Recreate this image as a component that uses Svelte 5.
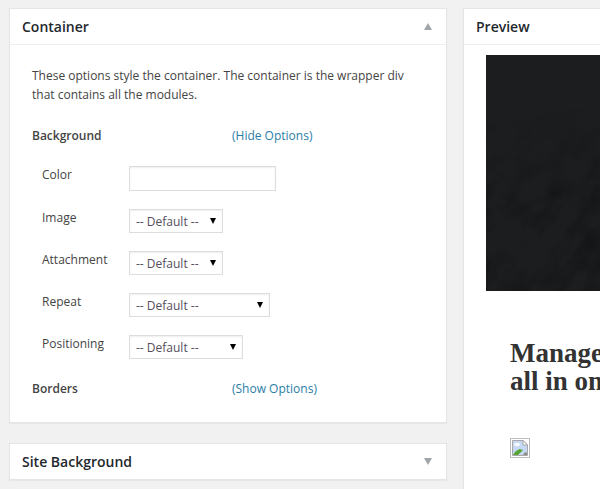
<script>
  const fields = [
    { label: 'Image', size: 'sm' },
    { label: 'Attachment', size: 'sm' },
    { label: 'Repeat', size: 'lg' },
    { label: 'Positioning', size: 'md' }
  ];
</script>

<div class="page">
  <div class="left">
    <section class="card">
      <header class="head">
        <h3>Container</h3>
        <span class="tri up"></span>
      </header>
      <div class="body">
        <p class="intro">These options style the container. The container is the wrapper div that contains all the modules.</p>
        <div class="group">
          <strong>Background</strong>
          <a href="#hide">(Hide Options)</a>
        </div>
        <div class="fields">
          <div class="field">
            <label for="color">Color</label>
            <input id="color" type="text" />
          </div>
          {#each fields as f}
            <div class="field">
              <label for={f.label}>{f.label}</label>
              <span class="sel {f.size}">
                <select id={f.label}><option>-- Default --</option></select>
              </span>
            </div>
          {/each}
        </div>
        <div class="group last">
          <strong>Borders</strong>
          <a href="#show">(Show Options)</a>
        </div>
      </div>
    </section>
    <section class="card">
      <header class="head closed">
        <h3>Site Background</h3>
        <span class="tri down"></span>
      </header>
    </section>
  </div>

  <section class="card preview">
    <header class="head">
      <h3>Preview</h3>
    </header>
    <div class="pbody">
      <svg class="hero" width="500" height="236" viewBox="0 0 500 236" aria-hidden="true">
        <defs>
          <filter id="grain" x="0" y="0" width="100%" height="100%">
            <feTurbulence type="fractalNoise" baseFrequency="0.025 0.05" numOctaves="6" seed="23" />
            <feColorMatrix values="0 0 0 0 0  0 0 0 0 0  0 0 0 0 0  1.7 0 0 0 -0.72" />
          </filter>
          <linearGradient id="fade" x1="0" y1="0" x2="0.3" y2="1">
            <stop offset="0.25" stop-color="#000" />
            <stop offset="0.6" stop-color="#fff" />
          </linearGradient>
          <mask id="m"><rect width="500" height="236" fill="url(#fade)" /></mask>
        </defs>
        <rect width="500" height="236" fill="#1c1d1f" />
        <g mask="url(#m)" opacity="0.4">
          <rect x="-300" y="-300" width="1100" height="900" filter="url(#grain)" transform="rotate(-52 250 118)" />
        </g>
      </svg>
      <h2>Manage your email<br />all in one place</h2>
      <svg class="broken" width="20" height="20" viewBox="0 0 20 20" aria-hidden="true">
        <rect x="0.5" y="0.5" width="19" height="19" fill="#fff" stroke="#bdbdbd" />
        <path d="M2.5 2.5h10.500l4.500 4.500v10.500h-15z" fill="#c6d8f3" stroke="#a6a6a6" />
        <path d="M13 2.500v4.500h4.500z" fill="#fff" stroke="#a6a6a6" />
        <ellipse cx="7" cy="6.500" rx="3" ry="1.800" fill="#f4f7fc" />
        <path d="M3 17l2.500-3.500 4-2.500 3.500 1-5 5z" fill="#55a533" />
        <path d="M13 17l2-3 2 1v2z" fill="#8c8c8c" />
      </svg>
    </div>
  </section>
</div>

<style>
  :global(body) {
    margin: 0;
    background: #f1f1f1;
    overflow: hidden;
  }
  .page {
    display: flex;
    align-items: flex-start;
    gap: 16px;
    height: 489px;
    overflow: hidden;
    box-sizing: border-box;
    padding: 8px 0 0 9px;
    font-family: "Open Sans", sans-serif;
    font-size: 12px;
    color: #444;
  }
  .left {
    flex: 0 0 438px;
    display: flex;
    flex-direction: column;
    gap: 20px;
  }
  .card {
    background: #fff;
    border: 1px solid #e5e5e5;
    box-shadow: 0 1px 1px rgba(0, 0, 0, 0.04);
    box-sizing: border-box;
  }
  .head {
    display: flex;
    justify-content: space-between;
    align-items: center;
    height: 36px;
    box-sizing: border-box;
    padding: 0 14px 0 12px;
    border-bottom: 1px solid #eee;
  }
  .head.closed {
    height: 35px;
    border-bottom: 0;
  }
  h3 {
    margin: 0;
    font-size: 14px;
    font-weight: 600;
    line-height: 1.4;
    color: #23282d;
  }
  .tri {
    width: 0;
    height: 0;
    border-left: 4px solid transparent;
    border-right: 4px solid transparent;
  }
  .tri.up { border-bottom: 7px solid #a0a5aa; }
  .tri.down { border-top: 7px solid #a0a5aa; }
  .body {
    padding: 21px 22px 24px;
  }
  .intro {
    margin: 0 0 23px;
    line-height: 19px;
    width: 385px;
  }
  .group {
    display: flex;
    line-height: 18px;
  }
  .group strong {
    flex: 0 0 200px;
    font-weight: 600;
  }
  .group a {
    color: #2a7ea8;
    text-decoration: none;
  }
  .fields {
    display: flex;
    flex-direction: column;
    gap: 18px;
    padding: 21px 0 21px 10px;
  }
  .field {
    display: flex;
    align-items: flex-start;
  }
  .field label {
    flex: 0 0 87px;
    line-height: 18px;
  }
  input {
    width: 147px;
    height: 25px;
    box-sizing: border-box;
    border: 1px solid #ddd;
    background: #fff;
    box-shadow: inset 0 1px 2px rgba(0, 0, 0, 0.07);
    margin: 0;
    padding: 0;
    outline: 0;
  }
  .sel {
    position: relative;
    display: block;
    height: 24px;
  }
  .sel.sm { width: 94px; }
  .sel.md { width: 114px; }
  .sel.lg { width: 141px; }
  .sel::after {
    content: "";
    position: absolute;
    right: 7px;
    top: 9px;
    border-left: 3px solid transparent;
    border-right: 3px solid transparent;
    border-top: 6px solid #000;
    pointer-events: none;
  }
  select {
    appearance: none;
    display: block;
    width: 100%;
    height: 24px;
    box-sizing: border-box;
    border: 1px solid #ddd;
    border-radius: 0;
    background: #fff;
    padding: 0 6px;
    margin: 0;
    font-family: inherit;
    font-size: 12px;
    color: #544e5c;
    box-shadow: inset 0 1px 2px rgba(0, 0, 0, 0.07);
  }
  .preview {
    flex: 0 0 500px;
    height: 700px;
  }
  .pbody {
    padding: 10px 21px 10px 22px;
  }
  .hero {
    display: block;
  }
  h2 {
    margin: 48px 0 43px 24px;
    font-family: "Liberation Serif", serif;
    font-weight: 700;
    font-size: 27px;
    line-height: 28px;
    color: #333;
    white-space: nowrap;
  }
  .broken {
    display: block;
    margin-left: 24px;
  }
</style>
